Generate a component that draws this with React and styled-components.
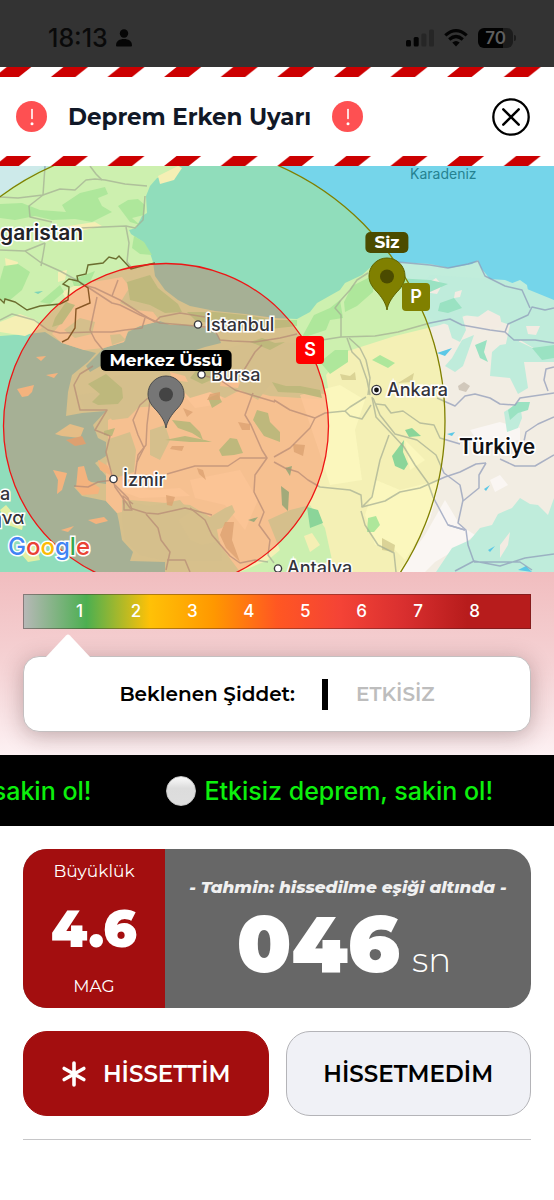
import React from "react";
import styled, { createGlobalStyle } from "styled-components";

const GlobalStyle = createGlobalStyle`
  * { box-sizing: border-box; }
  body { margin: 0; background: #ffffff; }
`;

const sans = `Inter, "Liberation Sans", sans-serif`;
const display = `Montserrat, Inter, "Liberation Sans", sans-serif`;

const Page = styled.main`
  min-height: 100vh;
  background: #ffffff;
  color: #000000;
  font-family: ${display};
  overflow: hidden;
`;

/* ---------- status bar ---------- */
const StatusBar = styled.div`
  display: flex;
  align-items: center;
  justify-content: space-between;
  height: 67px;
  padding: 8px 38px 0 48px;
  background: #333333;
  color: #0a0a0a;
  font-family: ${sans};
`;
const StatusGroup = styled.div`
  display: flex;
  align-items: center;
  gap: ${(p) => p.$gap}px;
`;
const Clock = styled.time`
  font-size: 25px;
  line-height: 28px;
  font-weight: 500;
`;
const Battery = styled.span`
  display: flex;
  align-items: center;
`;
const BatteryLevel = styled.span`
  width: 35px;
  height: 20px;
  border-radius: 6px;
  background: linear-gradient(90deg, #020202 70%, #1c1c1c 70%);
  color: #5e5e5e;
  font-size: 17px;
  line-height: 20px;
  font-weight: 600;
  text-align: center;
`;
const BatteryCap = styled.span`
  width: 2px;
  height: 6px;
  margin-left: 1px;
  border-radius: 0 2px 2px 0;
  background: #1c1c1c;
`;

/* ---------- header ---------- */
const Header = styled.header`
  background: #ffffff;
`;
const StripeSvg = styled.svg`
  display: block;
  width: 100%;
  height: 10px;
`;
const HeaderRow = styled.div`
  display: flex;
  align-items: center;
  height: 79px;
  padding: 0 24px 0 16px;
`;
const AlertBadge = styled.span`
  display: grid;
  place-items: center;
  flex: none;
  width: 31px;
  height: 31px;
  border-radius: 50%;
  background: #fe5052;
`;
const Title = styled.h1`
  margin: 0 21px;
  color: #111827;
  font-size: 23px;
  line-height: 32px;
  font-weight: 700;
  white-space: nowrap;
`;
const CloseButton = styled.button`
  display: grid;
  place-items: center;
  width: 38px;
  height: 38px;
  margin-left: auto;
  padding: 0;
  border: 0;
  background: none;
  color: #000000;
  cursor: pointer;
`;

/* ---------- map ---------- */
const MapBox = styled.section`
  position: relative;
  height: 406px;
  overflow: hidden;
  background: #75d5ea;
`;
const MapSvg = styled.svg`
  display: block;
  width: 100%;
  height: 100%;
`;
const halo = `
  -webkit-text-stroke: 3px #ffffff;
  paint-order: stroke fill;
`;
const Place = styled.span`
  position: absolute;
  left: ${(p) => p.$x}px;
  top: ${(p) => p.$y}px;
  color: ${(p) => p.$color || "#33333a"};
  font-family: ${sans};
  font-size: ${(p) => p.$size || 18}px;
  line-height: ${(p) => (p.$plain ? 16 : 24)}px;
  font-weight: ${(p) => p.$weight || 500};
  white-space: nowrap;
  ${(p) => !p.$plain && halo}
`;
const PinLabel = styled.span`
  position: absolute;
  left: ${(p) => p.$x}px;
  top: ${(p) => p.$y}px;
  padding: 0 9px;
  border-radius: 5px;
  background: ${(p) => p.$bg};
  color: #ffffff;
  font-size: 17px;
  line-height: 21px;
  font-weight: 700;
  white-space: nowrap;
  transform: translateX(-50%);
`;
const WaveTag = styled.span`
  position: absolute;
  left: ${(p) => p.$x}px;
  top: ${(p) => p.$y}px;
  width: 28px;
  height: 28px;
  border-radius: 4px;
  background: ${(p) => p.$bg};
  color: #ffffff;
  font-family: ${sans};
  font-size: 18px;
  line-height: 28px;
  font-weight: 600;
  text-align: center;
`;
const GoogleMark = styled.span`
  position: absolute;
  left: 8px;
  top: 366px;
  font-family: ${sans};
  font-size: 24px;
  line-height: 30px;
  font-weight: 500;
  ${halo}
`;
const Tint = styled.span`
  color: ${(p) => p.$c};
`;

/* ---------- intensity ---------- */
const Intensity = styled.section`
  height: 183px;
  padding: 22px 23px 0;
  background: linear-gradient(#f1bdbf, #f5d2d4 50%, #fdf1f3);
`;
const Scale = styled.ol`
  display: flex;
  height: 35px;
  margin: 0;
  padding: 0 calc(100% / 18);
  list-style: none;
  background: linear-gradient(
    90deg, #b8b8b8, #4caf50 12.5%, #ffc107 25%, #ff9800 37.5%, #ff5722 50%,
    #f44336 62.5%, #d92f2f 75%, #b71c1c 87.5%, #b71c1c
  );
  box-shadow: inset 0 0 0 1px rgba(60, 30, 30, 0.4);
`;
const ScaleStep = styled.li`
  flex: 1;
  color: #ffffff;
  font-family: ${sans};
  font-size: 17px;
  line-height: 35px;
  font-weight: 500;
  text-align: center;
`;
const Arrow = styled.svg`
  display: block;
  position: relative;
  z-index: 1;
  width: 46px;
  height: 24px;
  margin: 5px 0 0 22px;
`;
const Bubble = styled.div`
  display: flex;
  align-items: center;
  justify-content: center;
  height: 76px;
  margin-top: -2px;
  border: 1px solid #c4bfc0;
  border-radius: 16px;
  background: #ffffff;
  box-shadow: 0 4px 22px rgba(60, 20, 20, 0.3);
  font-size: 20px;
  line-height: 28px;
  white-space: nowrap;
`;
const BubbleLabel = styled.span`
  font-weight: 600;
`;
const Divider = styled.span`
  width: 6px;
  height: 31px;
  margin: 0 28px 0 27px;
  background: #000000;
`;
const BubbleValue = styled.strong`
  color: #bdbdbd;
  font-weight: 600;
`;

/* ---------- ticker ---------- */
const Ticker = styled.section`
  display: flex;
  align-items: center;
  justify-content: flex-end;
  gap: 75px;
  height: 71px;
  padding-right: 61px;
  overflow: hidden;
  background: #000000;
`;
const TickerItem = styled.span`
  display: flex;
  align-items: center;
  flex: none;
  gap: 8px;
  color: #0cf00c;
  font-family: ${sans};
  font-size: 25px;
  line-height: 32px;
  font-weight: 500;
  white-space: nowrap;
`;
const Ball = styled.span`
  width: 30px;
  height: 30px;
  border-radius: 50%;
  border: 1px solid #c6c6c6;
  background: linear-gradient(#fafafa, #dcdcdc 40%, #dedede);
`;

/* ---------- lower cards ---------- */
const Lower = styled.section`
  padding: 23px;
`;
const Summary = styled.div`
  display: flex;
  height: 159px;
  overflow: hidden;
  border-radius: 24px;
  background: #676767;
  color: #ffffff;
`;
const Magnitude = styled.div`
  display: flex;
  flex-direction: column;
  align-items: center;
  justify-content: space-between;
  flex: none;
  width: 142px;
  padding: 10px 0;
  background: #a30e0f;
`;
const Caption = styled.span`
  font-size: 17px;
  line-height: 24px;
  font-weight: 400;
`;
const MagnitudeValue = styled.strong`
  font-size: 51px;
  line-height: 56px;
  font-weight: 900;
`;
const Countdown = styled.div`
  display: flex;
  flex: 1;
  flex-direction: column;
  align-items: center;
  padding-top: 26px;
`;
const Forecast = styled.em`
  color: #f0f0f0;
  font-size: 17px;
  line-height: 24px;
  font-weight: 800;
  white-space: nowrap;
`;
const Timer = styled.div`
  display: flex;
  align-items: baseline;
  gap: 12px;
  padding-right: 8px;
`;
const Seconds = styled.strong`
  font-size: 79px;
  line-height: 90px;
  font-weight: 900;
`;
const Unit = styled.span`
  font-size: 34px;
  line-height: 40px;
  font-weight: 300;
`;
const Actions = styled.div`
  display: flex;
  gap: 17px;
  margin: 23px 0;
`;
const ActionButton = styled.button`
  display: flex;
  flex: 1;
  align-items: center;
  justify-content: center;
  gap: 16px;
  height: 85px;
  padding: 0;
  border: 1px solid ${(p) => (p.$primary ? "#a30e0f" : "#b4b4b8")};
  border-radius: 24px;
  background: ${(p) => (p.$primary ? "#a30e0f" : "#f0f1f6")};
  color: ${(p) => (p.$primary ? "#ffffff" : "#000000")};
  font-family: inherit;
  font-size: 23px;
  line-height: 28px;
  font-weight: 600;
  cursor: pointer;
`;
const Rule = styled.hr`
  height: 1px;
  margin: 0;
  border: 0;
  background: #c6c6c8;
`;

function Stripe({ id }) {
  return (
    <StripeSvg aria-hidden="true">
      <defs>
        <pattern id={id} x="-5.7" width="56.6" height="10" patternUnits="userSpaceOnUse">
          <path d="M0 10L12.5 0H37L24.5 10Z" fill="#cc0001" />
        </pattern>
      </defs>
      <rect width="100%" height="10" fill={`url(#${id})`} />
    </StripeSvg>
  );
}

function Alert() {
  return (
    <AlertBadge>
      <svg width="6" height="18" viewBox="0 0 6 18" aria-hidden="true">
        <path d="M3 1.500V10.500" stroke="#fff" strokeWidth="1.600" strokeLinecap="round" />
        <circle cx="3" cy="15.700" r="1.500" fill="#fff" />
      </svg>
    </AlertBadge>
  );
}

function Pin({ x, y, fill, stroke, dot }) {
  return (
    <g transform={`translate(${x} ${y})`}>
      <path
        d="M0 0C-1 -6 -4 -11 -9 -17C-14 -22 -18 -27 -18 -34A18 18 0 0 1 18 -34C18 -27 14 -22 9 -17C4 -11 1 -6 0 0Z"
        fill={fill}
        stroke={stroke}
      />
      <circle cy="-33.500" r="7" fill={dot} />
    </g>
  );
}

const roads = [
  "M0 197L18 198L43 195L60 189L75 190L86 180L95 179L105 180L125 184L147 186",
  "M43 195L45 166M90 166L96 174L102 180",
  "M52 222L30 217L29 206L43 195",
  "M62 229L80 228L126 226L135 228L143 220L145 196",
  "M126 227L129 243L127 262L131 267",
  "M0 250L25 251L40 262L60 271L80 282L112 303L120 305L140 315L160 323L185 325L215 328",
  "M45 243L43 255L41 266M25 251L45 243",
  "M0 320L12 314L34 320L48 330L60 333L92 332L112 332L125 330L142 328L145 318",
  "M80 284L95 288L120 300L140 313L155 322L160 317L180 313L205 317",
  "M112 296L118 280M97 297L90 330L95 340L103 350",
  "M212 325L220 340L232 341L255 342L280 338L297 334",
  "M322 340L341 337L375 336L398 332L430 323L450 319L462 325L490 330L505 332L514 340L535 340L554 343",
  "M341 337L341 315L335 308L341 300L350 290L357 280L368 273",
  "M505 332L508 324L528 315L532 307L545 310L554 308",
  "M347 338L352 352L360 360L367 380L370 395",
  "M349 338L360 348L366 360L370 378L368 395",
  "M397 262L430 265L448 268L468 264L478 261L485 276L505 286L522 290L530 308",
  "M345 411L350 407L366 397M274 400L290 410L315 418L325 413L345 411L350 416L362 419L371 405",
  "M315 418L310 428L290 448L274 457",
  "M372 397L376 417L392 434L404 447L415 465L428 483L433 497L448 525L465 530",
  "M373 398L380 415L395 434L417 440L436 455L444 473L460 485L463 500L458 523L466 530L468 545L474 562",
  "M376 404L385 405L391 413L403 411L420 423L434 425L440 438L460 444",
  "M389 435L380 460L372 497L362 507L385 501L400 492L420 488L445 477L460 472L476 464L486 463",
  "M362 507L361 495L350 490L320 487L308 480L298 472L285 468L274 462",
  "M361 511L365 525L378 545L394 553L396 572",
  "M437 398L455 406L465 396L475 394L490 398L500 404L515 405L520 398L554 393",
  "M463 501L479 488L479 475L486 463M500 459L515 466L535 466L554 455",
  "M523 446L526 432L538 424L554 417M554 367L546 369L544 380L548 391",
  "M267 458L240 458L228 466L195 466L167 474",
  "M253 393L245 415L251 425L262 450L267 458L255 475L254 492L264 512L259 525L270 540L268 555L274 563",
  "M202 375L220 380L235 390L255 396L275 402M262 345L255 352L244 370",
  "M148 398L140 405L133 420L138 435L144 448L137 462",
  "M150 400L147 425L146 445L138 455L135 475",
  "M113 480L98 482L88 487L74 486",
  "M93 366L80 374L74 385L80 410L107 410L95 430L110 436L106 452L115 487L130 508L146 513L158 514L185 508L212 515",
  "M124 506L123 496L133 504M115 485L128 498L132 510L124 510L124 500",
  "M146 514L158 528L161 540L170 552L166 570M167 560L185 560L190 572",
  "M190 508L205 520L212 535L230 556L240 563L255 560L268 562",
  "M455 571L474 561L500 566L525 558L554 554M465 530L455 527L448 525M474 562L520 562L532 570",
];

const forests = [
  "M0 204L22 203L40 210L66 212L62 205L80 193L105 187L108 194L98 198L102 206L112 212L92 222L75 219L52 220L35 216L15 220L0 218Z",
  "M118 206L128 200L138 199L145 205L144 215L132 218L140 225L130 222Z",
  "M72 280L95 271L90 282L80 286L74 286Z",
  "M4 266L18 264L30 272L22 290L10 300L0 300V280Z",
  "M40 302L60 285L64 292L50 304Z",
  "M134 236L144 242L152 255L140 254L132 248Z",
  "M55 318L66 302L75 305L62 324L52 327Z",
  "M127 282L150 275L158 288L178 304L182 312L165 313L150 305L130 300Z",
  "M187 312L215 312L245 315L275 320L297 320L297 326L270 329L230 328L195 320Z",
  "M302 337L314 315L330 308L340 300L343 318L330 320L326 330L308 336Z",
  "M344 302L352 286L374 275L373 292L357 306L345 312Z",
  "M320 362L335 350L348 350L348 362L330 374Z",
  "M272 382L286 386L300 386L320 390L322 398L300 393L278 392Z",
  "M250 342L262 338L275 343L285 342L270 350Z",
  "M88 384L106 374L122 388L123 398L118 404L98 405L92 402L100 394Z",
  "M198 366L218 368L216 378L202 384L190 378L195 372Z",
  "M257 410L268 413L270 422L280 432L280 442L264 436L253 420Z",
  "M230 438L237 439L243 453L234 455L222 456L219 450Z",
  "M172 420L190 422L200 432L203 440L192 433L178 428Z",
  "M165 440L185 436L205 440L212 442L190 442Z",
  "M104 431L115 428L112 436L104 435Z",
  "M208 398L218 394L222 402L212 408Z",
  "M368 518L376 516L380 525L374 532L367 532Z",
  "M508 410L518 402L530 402L528 410L518 413L510 420Z",
  "M475 345L487 340L484 352L488 362L480 358Z",
  "M440 303L454 298L462 308L448 313L438 311Z",
  "M395 278L430 280L448 284L430 292L398 288Z",
  "M372 360L380 355L395 363L388 368Z",
  "M532 348L554 345V358L542 360Z",
];

/* green, lightly wooded ground */
const meadows = [
  "M100 392L115 376L150 372L250 342L300 343L315 360L325 394L300 392L270 385L258 400L240 390L225 398L210 392L190 398L180 388L168 394L150 396L128 418L112 420L103 408L85 410L78 395Z",
  "M106 440L130 432L136 450L134 472L115 478L106 460Z",
  "M122 500L150 506L180 500L190 512L178 520L190 540L202 545L220 541L222 561L165 561L140 555L134 549L125 540L122 520Z",
  "M150 430L165 425L170 440L160 460L150 455Z",
  "M205 520L225 508L232 505L235 512L222 528L208 532Z",
  "M268 520L290 510L310 505L325 528L332 560L300 572H268L280 550Z",
  "M120 303L128 290L145 293L155 312L135 310Z M64 330L80 318L95 322L92 334L75 338Z M110 335L120 334L126 340L112 345Z",
  "M430 318L448 325L452 338L460 342L466 330L462 315L490 318L510 325L505 348L495 362L510 358L520 340L554 360V300L505 280L430 275L418 290Z",
  "M445 366L452 358L462 340L474 335L468 352L463 366L455 372Z",
  "M492 352L500 345L520 342L554 358V362L524 362L528 388L518 394L510 378L490 376Z",
  "M504 412L520 402L522 418L518 428L507 432Z",
  "M554 498L548 515L538 505L530 504L520 498L512 508L498 514L492 525L480 528L470 540L452 548L436 572H554Z",
];

/* bare ground that interrupts the green */
const bares = [
  "M68 226L95 222L102 226L80 231L60 230Z M5 258L18 262L16 270L6 268Z M58 272L67 270L65 280L58 282Z",
  "M0 322L20 314L36 320L42 328L25 336L0 332Z M158 176L178 166L182 168L174 180L160 184Z",
  "M425 285L436 278L442 285L437 294L424 292Z",
  "M455 292L462 290L460 297L454 298Z M475 319L488 310L500 316L502 326L490 330L480 326Z",
  "M526 326L540 326L536 335L528 334Z M500 545L510 532L508 545L500 558Z",
  "M304 536L312 533L320 545L310 552Z",
  "M170 372L185 376L188 382L172 380Z M222 376L240 382L238 388L220 386Z",
];

function MapDrawing() {
  return (
    <MapSvg viewBox="0 166 554 406" preserveAspectRatio="xMinYMin slice" aria-hidden="true">
      <rect x="0" y="166" width="2000" height="406" fill="#75d5ea" />
      {/* Balkans, Thrace and Anatolia */}
      <path
        d="M0 166H180L174 174L157 178L150 186L146 196L147 213L142 216L136 228L129 230L131 234L143 242L150 253L153 262L155 276L165 290L178 300L190 306L215 311L245 314L275 318L297 319L310 312L317 303L340 290L345 283L362 275L372 266L400 262L430 264L450 268L472 264L478 260L481 268L490 279L505 286L520 280L527 285L529 296L541 307L554 302V572H190L165 572V562L130 561L133 552L122 540L119 522L117 513L106 501L82 496L74 487L92 482L106 484L106 476L95 463L106 456L110 444L98 438L93 425L106 411L82 413L66 416L68 392L72 375L88 362L96 353L84 350L62 343L45 332L28 334L0 336Z"
        fill="#c1eddb"
      />
      {/* Sea of Marmara */}
      <path d="M104 348L124 342L128 332L140 326L160 321L170 325L185 325L206 328L218 335L221 343L205 347L190 352L180 362L104 364L90 372L86 366Z" fill="#75d5ea" />
      {/* dry inner Anatolia and Thrace */}
      <path
        d="M108 420L130 408L170 405L190 395L240 388L270 396L330 400L326 375L345 352L395 336L440 325L470 314L520 325L554 345V572H400L325 572L280 550L268 560L240 572L220 545L215 520L190 505L130 500L122 512L117 513L106 501L106 476L108 440Z"
        fill="#f2ede3"
      />
      <path d="M62 292L78 284L105 280L122 277L132 290L150 308L160 321L140 326L128 331L124 342L104 348L84 350L62 343L52 334L72 310Z" fill="#f0ebe4" />
      <path d="M300 395L340 385L365 400L355 430L362 480L330 485L322 460Z M376 480L400 490L440 480L430 520L405 560L395 550L375 545L365 515Z M405 440L425 460L410 470Z" fill="#fbf8ef" opacity=".8" />
      <path d="M445 500L460 525L475 535L455 550L435 562L425 572H398L425 535Z M470 430L500 422L520 428L520 440L480 445Z M490 480L500 475L508 485L495 492Z" fill="#faf6f3" />
      <path d="M180 390L225 390L220 404L195 408Z M190 480L240 470L258 500L245 530L225 505L195 498Z M115 478L150 490L180 488L190 496L140 498L118 490Z" fill="#faf3ea" />
      <path d="M0 166H44L0 195Z" fill="#cdeaea" />
      {meadows.map((d) => (
        <path key={d} d={d} fill="#bfecdb" />
      ))}
      {bares.map((d) => (
        <path key={d} d={d} fill="#f3ebe2" />
      ))}
      {forests.map((d) => (
        <path key={d} d={d} fill="#9ae2c2" />
      ))}
      {/* islands */}
      <g fill="#efd9c6">
        <path d="M17 389L34 385L32 392L28 396L22 397Z M46 375L58 373L54 378Z" />
        <path d="M53 470L67 473L62 490L57 494L58 480Z M78 467L84 466L88 480L100 488L98 494L82 495L76 488Z M88 520L104 517L108 521L96 524Z M61 530L74 526L68 532Z M36 357L46 356L41 361Z M98 460L108 466L112 476L100 470Z" />
      </g>
      <path d="M55 434L70 424L84 428L80 438L62 436Z" fill="#d8e9d2" />
      <path d="M66 440L82 436L86 444L75 446Z" fill="#cbbcb0" />
      <path d="M0 510L6 505L12 512L24 520L22 530L8 525Z M30 540L38 552L40 560L28 562L22 555Z" fill="#dbeccd" />
      {/* muted relief */}
      <g fill="#c9bfb2" opacity=".8">
        <path d="M225 522L234 522L232 540L240 562L226 548L220 535Z M210 394L220 392L220 400L207 400Z M183 408L193 412L187 417Z M172 446L184 446L182 451L170 449Z M197 468L203 470L206 480L199 474Z M166 495L175 497L172 506L167 505Z M238 422L250 424L250 430L242 430Z M293 444L305 445L303 456L294 452Z" />
        <path d="M340 374L350 376L355 372L356 380L342 380Z M398 383L414 373L412 382Z M382 538L395 545L394 552L382 550Z M458 386L464 382L470 386L466 392L459 390Z" />
      </g>
      {/* lakes */}
      <path d="M404 440L403 452L408 464L404 470L395 466L392 456Z M405 430L412 428L421 436L409 437Z M307 507L318 510L323 523L310 528Z M281 486L289 492L288 511L282 505Z M285 468L292 466L290 476Z M248 520L258 517L254 522Z" fill="#6fcbc0" />
      <path d="M437 353L452 348L445 356Z M447 434L455 432L452 436Z M484 489L490 485L486 491Z M488 550L495 546L490 552Z M518 570L526 566L532 572Z M34 292L43 291L38 294Z" fill="#5cc8e6" />
      <g fill="none" stroke="#8c98b8" strokeWidth="1.500" strokeLinejoin="round" opacity=".7">
        {roads.map((d) => (
          <path key={d} d={d} />
        ))}
      </g>
      {/* national borders */}
      <path
        d="M0 299L4 303L5 299L15 302L27 310L40 306L60 304L68 300L69 287L63 284L69 279L78 281L77 276L86 274L88 265L103 263L109 257L116 259L119 256L131 269L138 267L146 265L155 263M78 281L88 288L90 303L76 309L75 328L68 339L62 342"
        fill="none"
        stroke="#474a3c"
        strokeWidth="1.400"
      />
      {/* travelling P and S wave fronts */}
      <circle cx="166" cy="421" r="279" fill="#ffff00" fillOpacity=".2" stroke="#808000" strokeWidth="1.300" />
      <circle cx="166" cy="426" r="162.500" fill="#ff0000" fillOpacity=".2" stroke="#ee1515" strokeWidth="1.300" />
      <g fill="#fff" stroke="#3a3a40" strokeWidth="1.400">
        <circle cx="198" cy="324.500" r="3.600" />
        <circle cx="201.500" cy="374.500" r="3.600" />
        <circle cx="113.500" cy="479" r="3.600" />
        <circle cx="278" cy="568.500" r="3.600" />
        <circle cx="376.500" cy="390" r="4.600" />
      </g>
      <circle cx="376.500" cy="390" r="2.400" fill="#111" />
      <Pin x={166} y={428} fill="#767676" stroke="#4d4d4d" dot="#444444" />
      <Pin x={387} y={310} fill="#808000" stroke="#5f6400" dot="#4b4b00" />
    </MapSvg>
  );
}

function EpicenterMap() {
  return (
    <MapBox aria-label="Deprem haritası">
      <MapDrawing />
      <Place $x={0} $y={55} $size={21} $weight={600} $color="#222226">garistan</Place>
      <Place $x={410} $y={0} $size={14} $weight={400} $color="#258291" $plain>Karadeniz</Place>
      <Place $x={206} $y={147}>İstanbul</Place>
      <Place $x={211} $y={197}>Bursa</Place>
      <Place $x={123} $y={302}>İzmir</Place>
      <Place $x={387} $y={212}>Ankara</Place>
      <Place $x={287} $y={390}>Antalya</Place>
      <Place $x={459} $y={269} $size={21} $weight={600} $color="#111114">Türkiye</Place>
      <Place $x={0} $y={316}>a</Place>
      <Place $x={-9} $y={340}>ηνα</Place>
      <PinLabel $x={166} $y={184} $bg="#000000">Merkez Üssü</PinLabel>
      <PinLabel $x={387} $y={66} $bg="#4b4b00">Siz</PinLabel>
      <WaveTag $x={296} $y={170} $bg="#ff0000">S</WaveTag>
      <WaveTag $x={402} $y={117} $bg="#808000">P</WaveTag>
      <GoogleMark>
        <Tint $c="#4285f4">G</Tint>
        <Tint $c="#ea4335">o</Tint>
        <Tint $c="#fbbc05">o</Tint>
        <Tint $c="#4285f4">g</Tint>
        <Tint $c="#34a853">l</Tint>
        <Tint $c="#ea4335">e</Tint>
      </GoogleMark>
    </MapBox>
  );
}

const steps = [1, 2, 3, 4, 5, 6, 7, 8];

export default function App() {
  return (
    <Page>
      <GlobalStyle />
      <StatusBar>
        <StatusGroup $gap={8}>
          <Clock>18:13</Clock>
          <svg width="16" height="18" viewBox="0 0 16 18" fill="#060606" aria-hidden="true">
            <circle cx="8" cy="4.500" r="4.200" />
            <path d="M0 16.500C0 12 3.500 10 8 10S16 12 16 16.500Q16 17.500 15 17.500H1Q0 17.500 0 16.500Z" />
          </svg>
        </StatusGroup>
        <StatusGroup $gap={10}>
          <svg width="28" height="18" viewBox="0 0 28 18" aria-hidden="true">
            <rect y="11" width="5" height="6.500" rx="1.500" fill="#040404" />
            <rect x="7.700" y="8" width="5" height="9.500" rx="1.500" fill="#040404" />
            <rect x="15.400" y="4.500" width="5" height="13" rx="1.500" fill="#262626" />
            <rect x="23" y="0.500" width="5" height="17" rx="1.500" fill="#262626" />
          </svg>
          <svg width="24" height="18" viewBox="0 0 24 18" aria-hidden="true">
            <g fill="none" stroke="#040404" strokeWidth="3.200">
              <path d="M1.300 6.400Q12 -3 22.700 6.400" />
              <path d="M5.200 10.500Q12 4.500 18.800 10.500" />
            </g>
            <path d="M8.300 13.600Q12 10.400 15.700 13.600L12 17.500Z" fill="#040404" />
          </svg>
          <Battery>
            <BatteryLevel>70</BatteryLevel>
            <BatteryCap />
          </Battery>
        </StatusGroup>
      </StatusBar>

      <Header>
        <Stripe id="stripe-top" />
        <HeaderRow>
          <Alert />
          <Title>Deprem Erken Uyarı</Title>
          <Alert />
          <CloseButton aria-label="Kapat">
            <svg width="38" height="38" viewBox="0 0 38 38" fill="none" stroke="currentColor" strokeLinecap="round" aria-hidden="true">
              <circle cx="19" cy="19" r="17.700" strokeWidth="2.300" />
              <path d="M11.300 11.300L26.700 26.700M26.700 11.300L11.300 26.700" strokeWidth="2.500" />
            </svg>
          </CloseButton>
        </HeaderRow>
        <Stripe id="stripe-bottom" />
      </Header>

      <EpicenterMap />

      <Intensity>
        <Scale>
          {steps.map((n) => (
            <ScaleStep key={n}>{n}</ScaleStep>
          ))}
        </Scale>
        <Arrow viewBox="0 0 46 24" aria-hidden="true">
          <path d="M0 24L21 1.500Q23 -0.500 25 1.500L46 24Z" fill="#fff" />
        </Arrow>
        <Bubble>
          <BubbleLabel>Beklenen Şiddet:</BubbleLabel>
          <Divider />
          <BubbleValue>ETKİSİZ</BubbleValue>
        </Bubble>
      </Intensity>

      <Ticker>
        <TickerItem><Ball />Etkisiz deprem, sakin ol!</TickerItem>
        <TickerItem><Ball />Etkisiz deprem, sakin ol!</TickerItem>
      </Ticker>

      <Lower>
        <Summary>
          <Magnitude>
            <Caption>Büyüklük</Caption>
            <MagnitudeValue>4.6</MagnitudeValue>
            <Caption>MAG</Caption>
          </Magnitude>
          <Countdown>
            <Forecast>- Tahmin: hissedilme eşiği altında -</Forecast>
            <Timer>
              <Seconds>046</Seconds>
              <Unit>sn</Unit>
            </Timer>
          </Countdown>
        </Summary>
        <Actions>
          <ActionButton $primary>
            <svg width="26" height="26" viewBox="0 0 26 26" stroke="#fff" strokeWidth="3.600" strokeLinecap="round" aria-hidden="true">
              <path d="M13 2V24M3.200 7.500L22.800 18.500M22.800 7.500L3.200 18.500" />
            </svg>
            HİSSETTİM
          </ActionButton>
          <ActionButton>HİSSETMEDİM</ActionButton>
        </Actions>
        <Rule />
      </Lower>
    </Page>
  );
}
